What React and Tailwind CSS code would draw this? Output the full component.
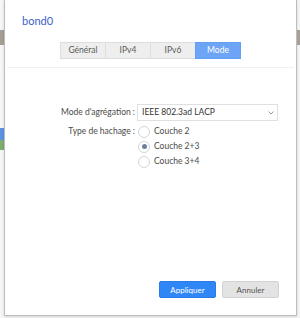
import React from 'react';

const tabs = ['Général', 'IPv4', 'IPv6', 'Mode'];
const hashes = ['Couche 2', 'Couche 2+3', 'Couche 3+4'];

const Radio = ({ checked, label }) => (
    <div className="flex items-center h-[15px]">
        <span className="w-[12px] h-[12px] rounded-full border border-[#d6d6d6] bg-white flex items-center justify-center">
            {checked && <span className="w-[5px] h-[5px] rounded-full bg-[#6f7f9e]" />}
        </span>
        <span className="ml-[4px] text-[8.5px] text-[#4a4a4a]">{label}</span>
    </div>
);

export default function App() {
    return (
        <div className="w-[300px] h-[318px] bg-[#f7f7f7] flex overflow-hidden font-['Lato',sans-serif]">
            {/* bits of the page behind the dialog */}
            <div className="w-[4px] flex flex-col">
                <div className="mt-[30px] h-[15px] bg-[#a69f95]" />
                <div className="mt-[83px] h-[12px] bg-[#5d93e2]" />
                <div className="h-[10px] bg-[#7fae70]" />
            </div>

            <div className="w-[293px] h-[316px] bg-white border-x border-b border-[#bdbdbd] shadow-[0_1px_3px_rgba(0,0,0,0.15)] flex flex-col">
                <div className="pt-[15px] pl-[17px] text-[11px] leading-[12px] text-[#3b62cc]">bond0</div>

                <div className="mt-[15px] flex justify-center">
                    {tabs.map((t) => (
                        <div
                            key={t}
                            className={`w-[46px] h-[17px] flex items-center justify-center text-[8.5px] border ${t === 'Mode'
                                ? 'bg-[#6ea4f6] border-[#64a0f2] text-white'
                                : 'bg-[#eeeeee] border-[#dddddd] text-[#5a5a5a] -mr-px'
                                }`}
                        >
                            {t}
                        </div>
                    ))}
                </div>

                <div className="mt-[8px] mx-[2px] h-px bg-[#f0f0f0]" />

                <div className="mt-[36px] flex items-center">
                    <div className="w-[130px] text-right text-[8.5px] text-[#4a4a4a]">Mode d'agrégation :</div>
                    <div className="ml-[2px] w-[141px] h-[17px] border border-[#e0e0e0] flex items-center justify-between pl-[4px] pr-[3px] text-[8.5px] text-[#333]">
                        <span>IEEE 802.3ad LACP</span>
                        <svg width="6" height="4" viewBox="0 0 6 4" fill="none">
                            <path d="M0.5 0.5 L3 3 L5.5 0.5" stroke="#888" strokeWidth="0.9" />
                        </svg>
                    </div>
                </div>

                <div className="mt-[3px] flex items-start">
                    <div className="w-[130px] h-[15px] flex items-center justify-end text-[8.5px] text-[#4a4a4a]">Type de hachage :</div>
                    <div className="ml-[3px] flex flex-col">
                        {hashes.map((h) => (
                            <Radio key={h} label={h} checked={h === 'Couche 2+3'} />
                        ))}
                    </div>
                </div>

                <div className="mt-auto pb-[17px] pr-[17px] flex justify-end gap-[6px]">
                    <button className="w-[57px] h-[17px] rounded-[2px] bg-[#2f86f6] border border-[#2a7be6] text-white text-[8px]">
                        Appliquer
                    </button>
                    <button className="w-[57px] h-[17px] rounded-[2px] bg-[#e3e3e3] border border-[#d3d3d3] text-[#555] text-[8px]">
                        Annuler
                    </button>
                </div>
            </div>

            <div className="w-[3px] flex flex-col">
                <div className="mt-[30px] h-[15px] bg-[#a69f95]" />
            </div>
        </div>
    );
}
